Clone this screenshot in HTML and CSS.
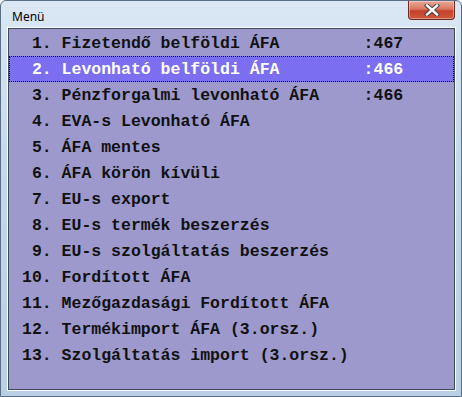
FILE: index.html
```html
<!DOCTYPE html>
<html lang="hu">
<head>
    <meta charset="UTF-8">
    <title>Menü</title>
    <link rel="stylesheet" href="styles.css">
</head>
<body>
    <div class="window">
        <div class="titlebar">
            <span class="title">Menü</span>
            <div class="close-btn">
                <svg width="16" height="12" viewBox="0 0 16 12">
                    <path d="M3 1.5 L13 10.5 M13 1.5 L3 10.5" stroke="#3b3b3b" stroke-width="4.2" stroke-linecap="square" />
                    <path d="M3 1.5 L13 10.5 M13 1.5 L3 10.5" stroke="#ffffff" stroke-width="2.4" stroke-linecap="square" />
                </svg>
            </div>
        </div>
        <div class="client">
            <ul class="menu">
                <li class="item"><span class="num">1.</span><span class="label">Fizetendő belföldi ÁFA</span><span class="value">:467</span></li>
                <li class="item selected"><span class="num">2.</span><span class="label">Levonható belföldi ÁFA</span><span class="value">:466</span></li>
                <li class="item"><span class="num">3.</span><span class="label">Pénzforgalmi levonható ÁFA</span><span class="value">:466</span></li>
                <li class="item"><span class="num">4.</span><span class="label">EVA-s Levonható ÁFA</span></li>
                <li class="item"><span class="num">5.</span><span class="label">ÁFA mentes</span></li>
                <li class="item"><span class="num">6.</span><span class="label">ÁFA körön kívüli</span></li>
                <li class="item"><span class="num">7.</span><span class="label">EU-s export</span></li>
                <li class="item"><span class="num">8.</span><span class="label">EU-s termék beszerzés</span></li>
                <li class="item"><span class="num">9.</span><span class="label">EU-s szolgáltatás beszerzés</span></li>
                <li class="item"><span class="num">10.</span><span class="label">Fordított ÁFA</span></li>
                <li class="item"><span class="num">11.</span><span class="label">Mezőgazdasági Fordított ÁFA</span></li>
                <li class="item"><span class="num">12.</span><span class="label">Termékimport ÁFA (3.orsz.)</span></li>
                <li class="item"><span class="num">13.</span><span class="label">Szolgáltatás import (3.orsz.)</span></li>
            </ul>
        </div>
    </div>
</body>
</html>
```

FILE: styles.css
```css
html, body {
    margin: 0;
    padding: 0;
    width: 462px;
    height: 397px;
    overflow: hidden;
    background: #ffffff;
}

.window {
    width: 462px;
    height: 397px;
    box-sizing: border-box;
    border: 1px solid #5a6e85;
    border-radius: 6px 6px 0 0;
    background: linear-gradient(to bottom, #dbe7f4 0%, #c5d8ec 40%, #b9cfe6 100%);
    padding: 0 6px 6px 7px;
    display: flex;
    flex-direction: column;
}

.titlebar {
    height: 27px;
    display: flex;
    align-items: flex-start;
    justify-content: space-between;
}

.title {
    font-family: "Noto Sans", sans-serif;
    font-size: 12px;
    color: #000;
    margin-top: 7px;
    margin-left: 4px;
}

.close-btn {
    width: 47px;
    height: 19px;
    box-sizing: border-box;
    border: 1px solid #6d2a20;
    border-top: none;
    border-radius: 0 0 4px 4px;
    background: linear-gradient(to bottom, #e9a99c 0%, #d8765f 45%, #c4402a 55%, #cf5a3e 100%);
    box-shadow: inset 0 0 0 1px rgba(255, 255, 255, 0.35);
    display: flex;
    align-items: center;
    justify-content: center;
}

.client {
    flex: 1;
    border: 1px solid #3c4a5c;
    box-shadow: 0 0 0 1px #ffffff;
    background: #9d99cd;
    padding-top: 1px;
}

.menu {
    list-style: none;
    margin: 0;
    padding: 0;
    font-family: "Courier New", "Nimbus Mono PS", "FreeMono", "Liberation Mono", monospace;
    font-weight: bold;
    font-size: 16.5px;
    color: #111111;
}

.item {
    height: 26px;
    box-sizing: border-box;
    display: flex;
    align-items: center;
    padding-left: 12px;
    border: 1px dotted transparent;
}

.item.selected {
    background: #7b6ef0;
    color: #ffffff;
    border-color: #000000;
}

.num {
    width: 3ch;
    text-align: right;
    margin-right: 1ch;
}

.label {
    width: 30.5ch;
}
```
